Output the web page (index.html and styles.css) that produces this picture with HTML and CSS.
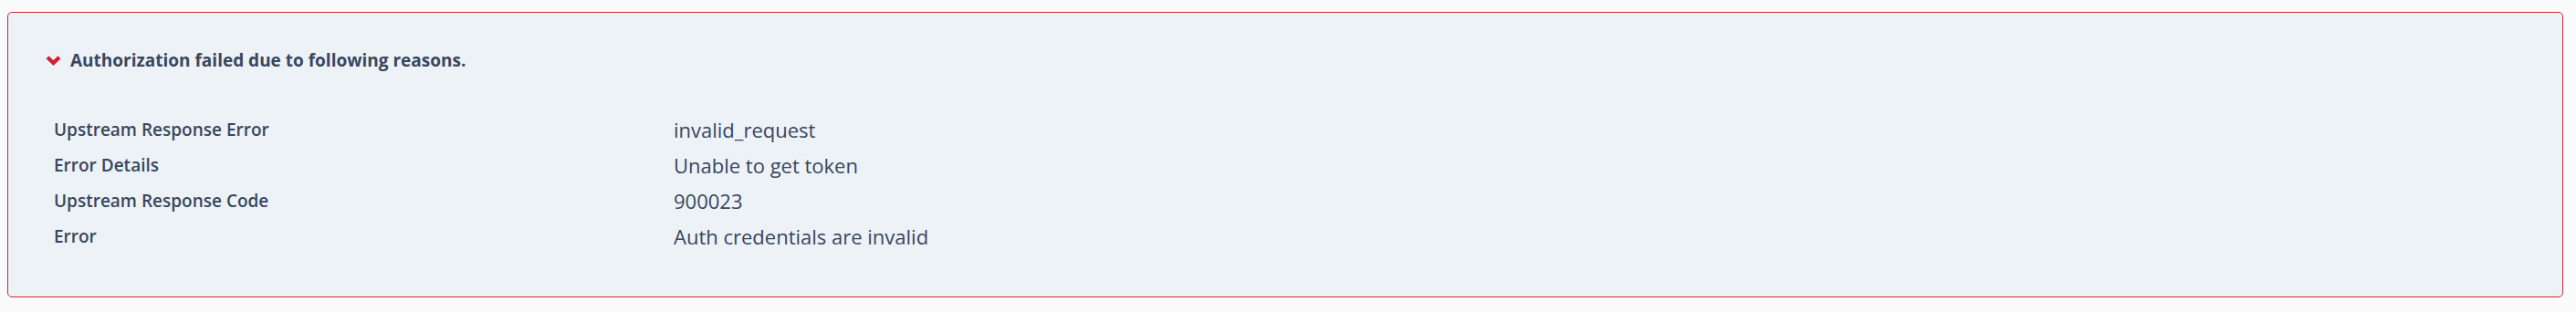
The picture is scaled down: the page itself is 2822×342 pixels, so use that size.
FILE: index.html
```html
<!DOCTYPE html>
<html>
<head>
<meta charset="utf-8">
<link rel="stylesheet" href="styles.css">
</head>
<body>
<div class="alert">
  <div class="alert-head">
    <svg class="chevron" width="17" height="12" viewBox="0 0 17 12"><path d="M2 2.8 L8.5 9 L15 2.8" fill="none" stroke="#d11f37" stroke-width="4.2" stroke-linecap="butt" stroke-linejoin="miter"/></svg>
    <span class="alert-title">Authorization failed due to following reasons.</span>
  </div>
  <div class="details">
    <div class="label">Upstream Response Error</div><div class="value">invalid_request</div>
    <div class="label">Error Details</div><div class="value">Unable to get token</div>
    <div class="label">Upstream Response Code</div><div class="value">900023</div>
    <div class="label">Error</div><div class="value">Auth credentials are invalid</div>
  </div>
</div>
</body>
</html>
```
FILE: styles.css
```css
html, body { margin: 0; padding: 0; }
body {
  background: #f8fafc;
  padding: 13px 14px 0 8px;
  font-family: "Open Sans", "Noto Sans", sans-serif;
  color: #38475d;
}
.alert {
  background: #edf2f7;
  border: 1px solid #cf2a3c;
  border-radius: 5px;
  padding: 40px 0 46px 41px;
}
.alert-head {
  display: flex;
  align-items: center;
  gap: 10px;
  height: 24px;
}
.chevron { display: block; }
.alert-title {
  font-size: 19px;
  font-weight: 700;
  line-height: 24px;
}
.details {
  margin-top: 45px;
  padding-left: 9px;
  display: grid;
  grid-template-columns: 679px 1fr;
  line-height: 39px;
}
.label { font-size: 19px; font-weight: 600; }
.value { font-size: 22px; font-weight: 400; }
```
